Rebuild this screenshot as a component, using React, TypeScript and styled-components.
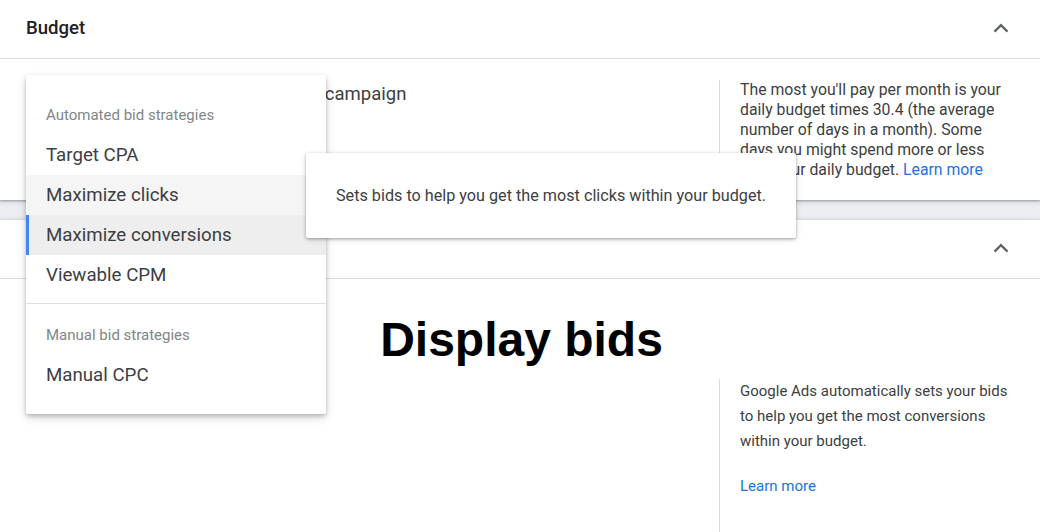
import React from "react";
import styled, { createGlobalStyle } from "styled-components";

const GlobalStyle = createGlobalStyle`
  html, body {
    margin: 0;
    padding: 0;
  }
  body {
    background: #eceef1;
    font-family: Roboto, "Noto Sans", Arial, sans-serif;
    -webkit-font-smoothing: antialiased;
  }
`;

const Page = styled.div`
  position: relative;
  width: 1040px;
  height: 532px;
  overflow: hidden;
  display: flex;
  flex-direction: column;
  gap: 20px;
`;

const Card = styled.section<{ $height?: number }>`
  flex-shrink: 0;
  ${(p) => (p.$height ? `height: ${p.$height}px;` : "flex: 1;")}
  display: flex;
  flex-direction: column;
  overflow: hidden;
  background: #fff;
  box-shadow: 0 1px 2px rgba(60, 64, 67, 0.4), 0 1px 5px 1px rgba(60, 64, 67, 0.15);
`;

const Header = styled.header`
  height: 59px;
  flex-shrink: 0;
  box-sizing: border-box;
  display: flex;
  align-items: center;
  justify-content: space-between;
  padding: 0 31px 2px 26px;
  border-bottom: 1px solid #dadce0;
`;

const Title = styled.h2`
  margin: 0;
  font-size: 18.6px;
  font-weight: 500;
  color: #202124;
`;

const Chevron = () => (
  <svg width="16" height="10" viewBox="0 0 16 10" aria-hidden="true">
    <polyline
      points="1.5,8.6 8,2.2 14.5,8.6"
      fill="none"
      stroke="#5f6368"
      strokeWidth="2.3"
    />
  </svg>
);

const Body = styled.div`
  flex: 1;
  display: flex;
`;

const Main = styled.div`
  flex: 1;
  padding: 22px 26px;
  font-size: 18.5px;
  line-height: 26px;
  color: #3c4043;
  white-space: nowrap;
`;

const Aside = styled.aside<{ $top: number; $lh: number; $size: number; $width: number }>`
  width: ${(p) => p.$width}px;
  margin-top: ${(p) => p.$top}px;
  padding: 0 ${(p) => 300 - p.$width}px 20px 20px;
  border-left: 1px solid #dadce0;
  font-size: ${(p) => p.$size}px;
  line-height: ${(p) => p.$lh}px;
  color: #3c4043;
`;

const Para = styled.p`
  margin: 0;
`;

const Link = styled.a<{ $block?: boolean }>`
  color: #1a73e8;
  text-decoration: none;
  ${(p) => p.$block && "display: block; margin-top: 20px;"}
`;

const Menu = styled.div`
  position: absolute;
  left: 26px;
  top: 75px;
  width: 300px;
  padding: 8px 0 19px;
  background: #fff;
  border-radius: 2px;
  box-shadow: 0 2px 4px rgba(0, 0, 0, 0.2), 0 4px 10px rgba(0, 0, 0, 0.15);
  z-index: 2;
`;

const Group = styled.div`
  padding-bottom: 8px;
  & + & {
    border-top: 1px solid #e0e0e0;
    padding-bottom: 0;
  }
`;

const GroupLabel = styled.div<{ $top: number }>`
  padding: ${(p) => p.$top}px 20px 12px;
  font-size: 15px;
  line-height: 16px;
  color: #80868b;
`;

const Item = styled.div<{ $state?: "hover" | "active" }>`
  height: 40px;
  display: flex;
  align-items: center;
  padding-left: 20px;
  font-size: 18.7px;
  color: #3c4043;
  background: ${(p) =>
    p.$state === "active" ? "#eeeeee" : p.$state === "hover" ? "#f5f5f5" : "transparent"};
  box-shadow: ${(p) => (p.$state === "active" ? "inset 3px 0 0 #4285f4" : "none")};
`;

const Tooltip = styled.div`
  position: absolute;
  left: 306px;
  top: 153px;
  width: 430px;
  height: 85px;
  padding: 0 30px;
  display: flex;
  align-items: center;
  background: #fff;
  border-radius: 2px;
  box-shadow: 0 1px 3px rgba(0, 0, 0, 0.3), 0 2px 6px rgba(0, 0, 0, 0.12);
  font-size: 16.2px;
  color: #3c4043;
  white-space: nowrap;
  z-index: 3;
`;

const Caption = styled.div`
  position: absolute;
  left: 3px;
  right: 0;
  top: 316px;
  text-align: center;
  font-family: "Liberation Sans", Arial, sans-serif;
  font-weight: 700;
  font-size: 48px;
  line-height: 48px;
  color: #000;
  z-index: 1;
`;

const automated = ["Target CPA", "Maximize clicks", "Maximize conversions", "Viewable CPM"];

export default function App() {
  return (
    <>
      <GlobalStyle />
      <Page>
        <Card $height={200}>
          <Header>
            <Title>Budget</Title>
            <Chevron />
          </Header>
          <Body>
            <Main>Set the average daily budget for this campaign</Main>
            <Aside $top={21} $lh={20} $size={15.8} $width={264}>
              <Para>
                The most you'll pay per month is your daily budget times 30.4 (the average number
                of days in a month). Some days you might spend more or less than your daily
                budget. <Link href="#">Learn more</Link>
              </Para>
            </Aside>
          </Body>
        </Card>

        <Card>
          <Header>
            <Title>Bidding</Title>
            <Chevron />
          </Header>
          <Body>
            <Main />
            <Aside $top={100} $lh={25} $size={15} $width={280}>
              <Para>
                Google Ads automatically sets your bids to help you get the most conversions within
                your budget.
              </Para>
              <Link href="#" $block>
                Learn more
              </Link>
            </Aside>
          </Body>
        </Card>

        <Caption>Display bids</Caption>

        <Menu>
          <Group>
            <GroupLabel $top={24}>Automated bid strategies</GroupLabel>
            {automated.map((label) => (
              <Item
                key={label}
                $state={
                  label === "Maximize clicks"
                    ? "hover"
                    : label === "Maximize conversions"
                    ? "active"
                    : undefined
                }
              >
                {label}
              </Item>
            ))}
          </Group>
          <Group>
            <GroupLabel $top={23}>Manual bid strategies</GroupLabel>
            <Item>Manual CPC</Item>
          </Group>
        </Menu>

        <Tooltip>Sets bids to help you get the most clicks within your budget.</Tooltip>
      </Page>
    </>
  );
}
